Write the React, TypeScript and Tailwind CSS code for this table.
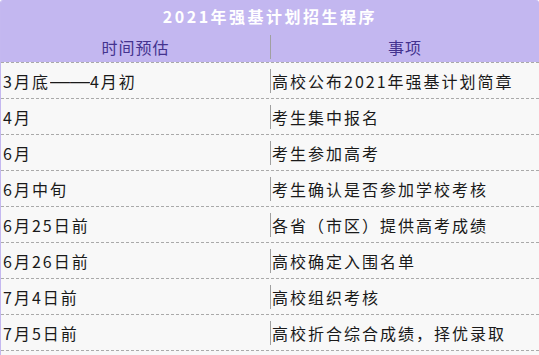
import React from "react";

const rows: [string, string][] = [
  ["3月底——4月初", "高校公布2021年强基计划简章"],
  ["4月", "考生集中报名"],
  ["6月", "考生参加高考"],
  ["6月中旬", "考生确认是否参加学校考核"],
  ["6月25日前", "各省（市区）提供高考成绩"],
  ["6月26日前", "高校确定入围名单"],
  ["7月4日前", "高校组织考核"],
  ["7月5日前", "高校折合综合成绩，择优录取"],
];

// the CJK face draws a short em dash; stretch a Latin one so the pair reads as one long line
function TimeText({ text }: { text: string }) {
  const parts = text.split(/(——)/);
  return (
    <>
      {parts.map((p, i) =>
        p === "——" ? (
          <span key={i} className="inline-block w-[40px] overflow-visible">
            <span
              className="inline-block tracking-normal scale-x-[1.25] origin-left"
              style={{ fontFamily: '"Liberation Sans", sans-serif' }}
            >
              ——
            </span>
          </span>
        ) : (
          <span key={i}>{p}</span>
        )
      )}
    </>
  );
}

export default function App() {
  return (
    <div
      className="w-[539px] h-[355px] bg-white overflow-hidden"
      style={{ fontFamily: '"Noto Sans CJK SC", "Noto Sans", sans-serif' }}
    >
      <div className="border-l border-[#c4b8f0] rounded-tl-[3px] rounded-tr-[3px] overflow-hidden bg-[#f8f8f8]">
        {/* header */}
        <div className="bg-[#c3b7f0]">
          <div className="h-[31px] flex items-center justify-center text-white font-bold text-[16px] tracking-[2.5px]">
            2021年强基计划招生程序
          </div>
          <div className="h-[31px] grid grid-cols-2 text-[#44338f] text-[16px] tracking-[1px]">
            <div className="flex items-center justify-center">时间预估</div>
            <div className="flex items-center">
              <span className="border-l border-[#a0a0a0] h-6 w-full flex items-center justify-center">
                事项
              </span>
            </div>
          </div>
        </div>

        {/* body */}
        {rows.map(([time, item]) => (
          <div
            key={time}
            className="grid grid-cols-2 h-9 border-t border-dashed border-[#aaaaaa] text-[16px] text-[#1a1a1a] tracking-[2px]"
          >
            <div className="flex items-center pl-[2px]">
              <TimeText text={time} />
            </div>
            <div className="flex items-center">
              <span className="border-l border-[#a0a0a0] h-6 leading-6 pl-[1px]">{item}</span>
            </div>
          </div>
        ))}
        <div className="border-t border-dashed border-[#aaaaaa] h-2" />
      </div>
    </div>
  );
}
